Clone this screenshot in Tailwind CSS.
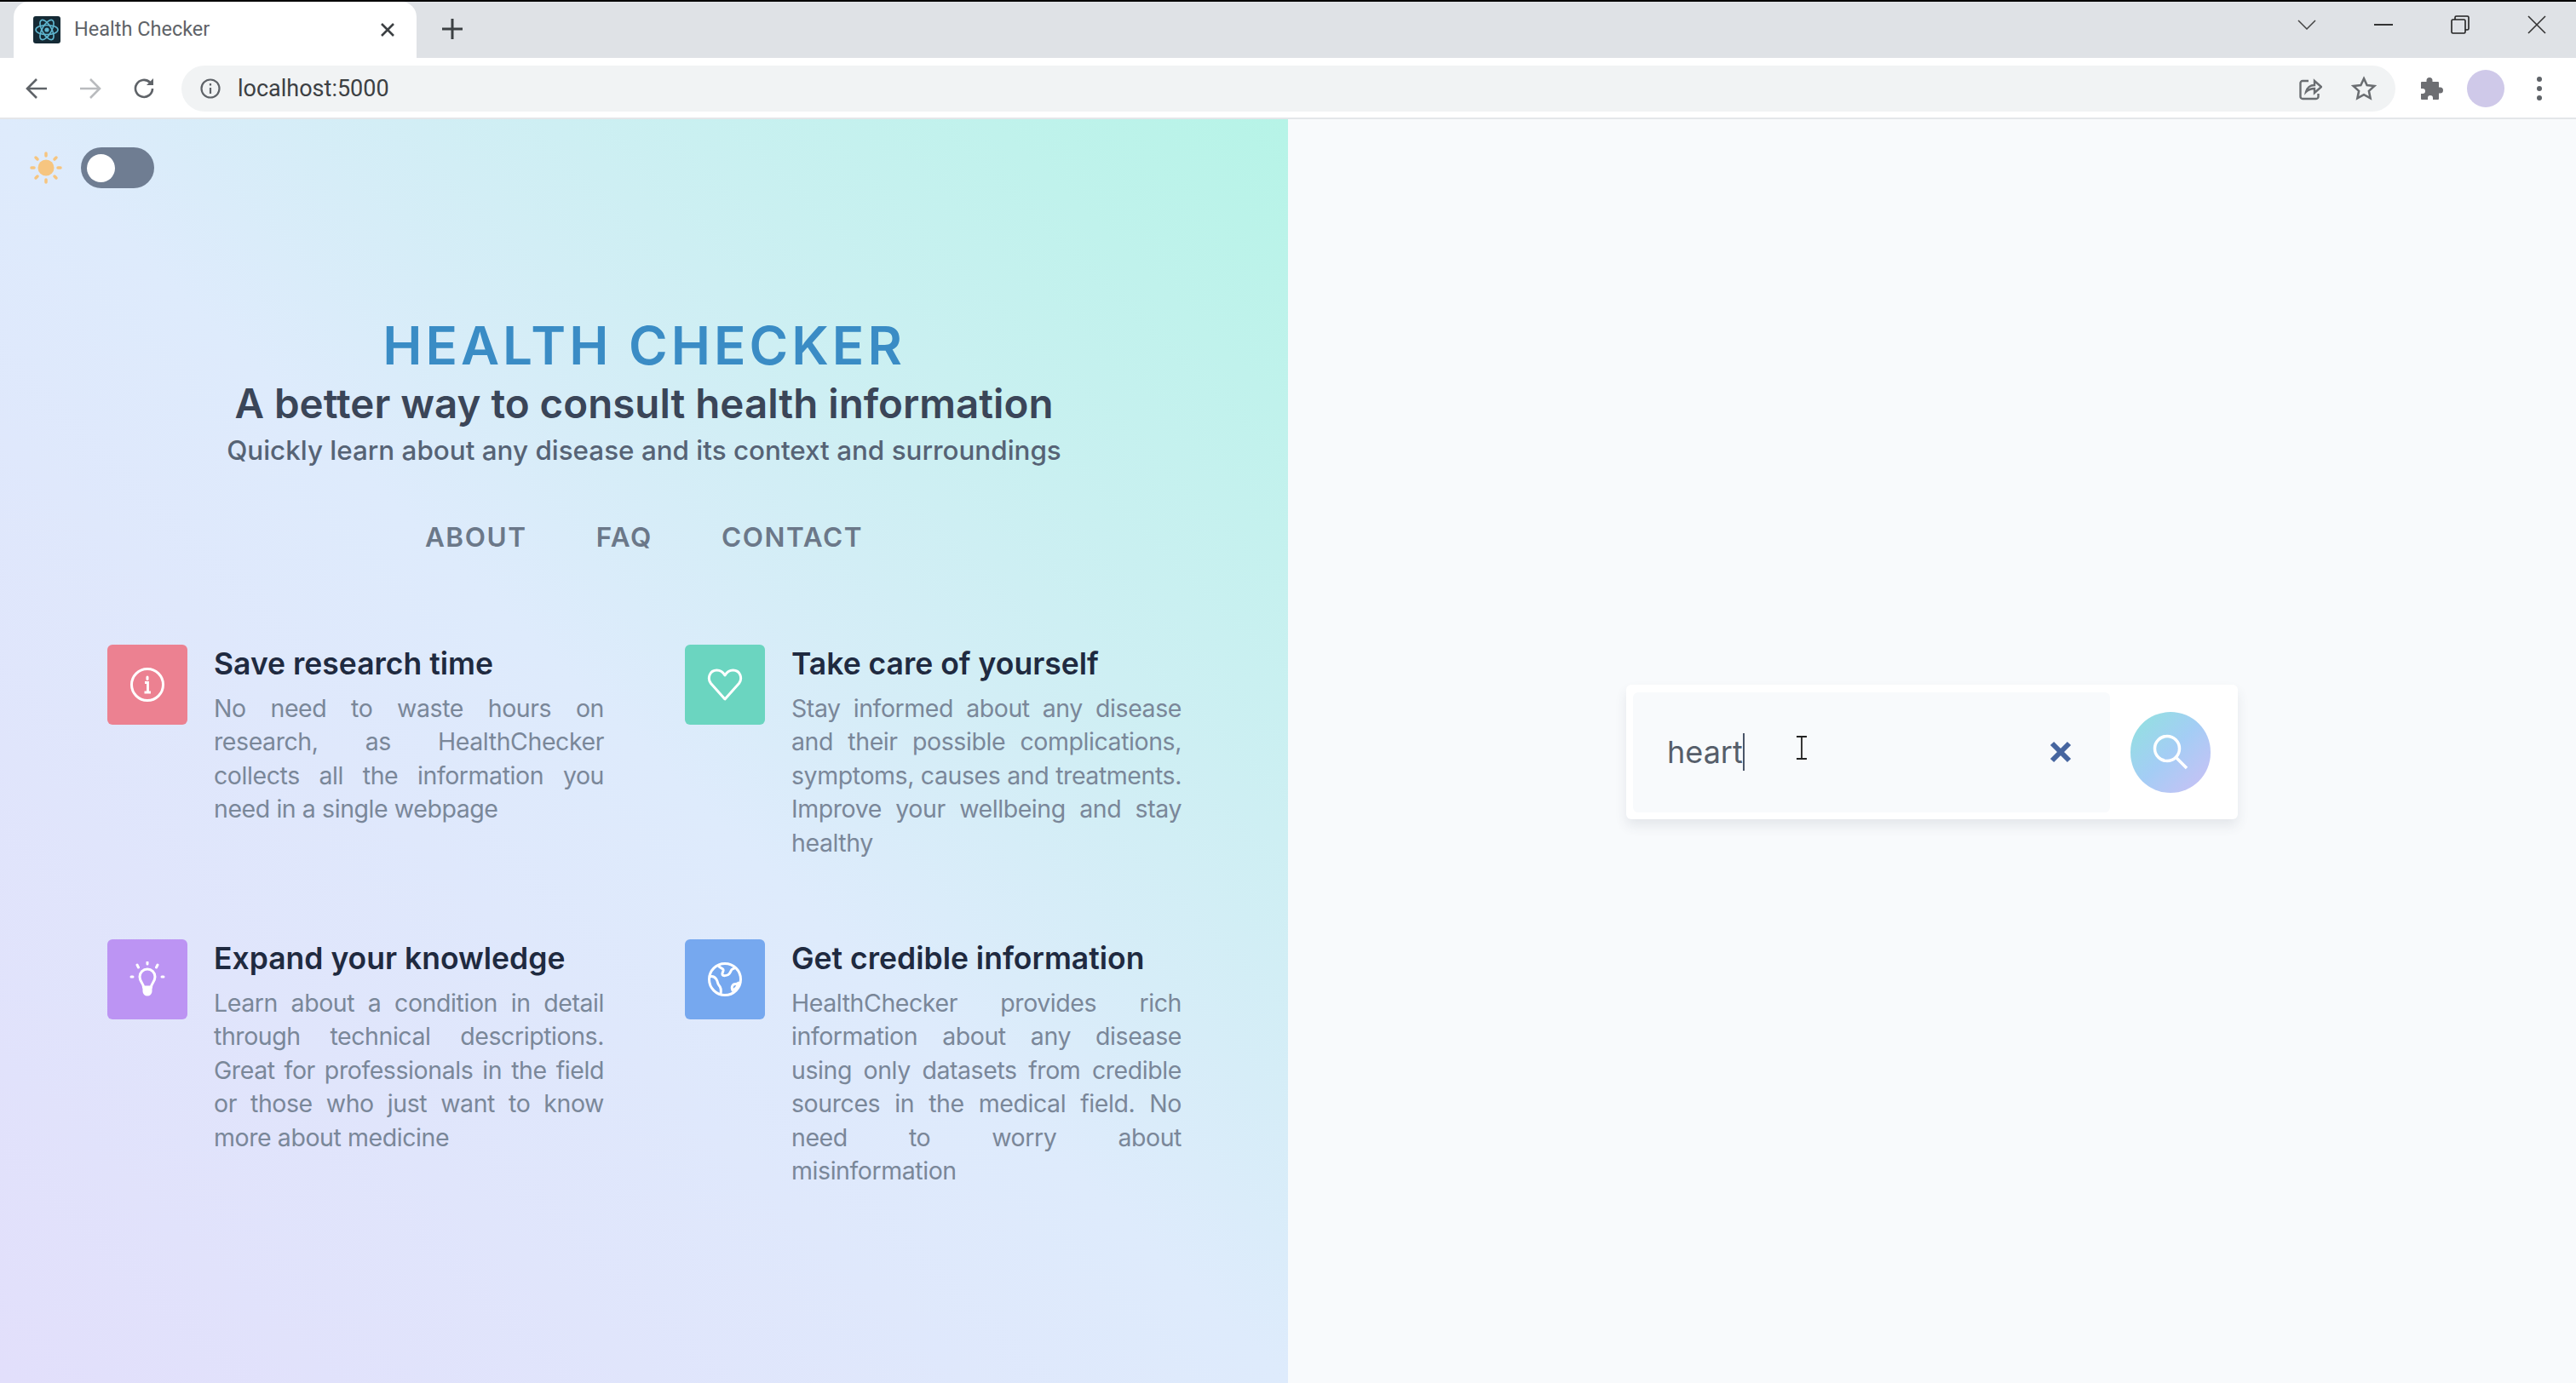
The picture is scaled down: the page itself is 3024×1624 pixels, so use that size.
<!DOCTYPE html>
<html lang="en">
<head>
<meta charset="utf-8">
<title>Health Checker</title>
<script src="https://cdn.jsdelivr.net/npm/@tailwindcss/browser@4"></script>
</head>
<body class="w-[3024px] h-[1624px] overflow-hidden bg-[#f8fafc] font-[Inter,sans-serif]">
<div class="h-[2px] bg-black"></div>
<!-- tab strip -->
<div class="h-[66px] bg-[#dfe2e6] flex items-end pl-[16px] font-[Roboto,sans-serif]">
  <div class="w-[473px] h-[66px] bg-white rounded-t-[18px] flex items-center pl-[23px] pr-[24px]">
    <svg class="w-[32px] h-[32px] shrink-0" viewBox="0 0 32 32"><rect width="32" height="32" rx="3" fill="#152a35"/><g fill="none" stroke="#5fb6cf" stroke-width="1.6"><ellipse cx="16" cy="16" rx="13" ry="5.5"/><ellipse cx="16" cy="16" rx="13" ry="5.5" transform="rotate(60 16 16)"/><ellipse cx="16" cy="16" rx="13" ry="5.5" transform="rotate(120 16 16)"/></g><circle cx="16" cy="16" r="2.6" fill="#5fb6cf"/></svg>
    <span class="ml-[16px] text-[23.5px] text-[#5f6368] leading-none">Health Checker</span>
    <svg class="ml-auto w-[20px] h-[20px]" viewBox="0 0 20 20" fill="none" stroke="#3c4043" stroke-width="2.6"><path d="M3 3l14 14M17 3L3 17"/></svg>
  </div>
  <svg class="ml-[30px] mb-[22px] w-[24px] h-[24px]" viewBox="0 0 24 24" fill="none" stroke="#3c4043" stroke-width="3"><path d="M12 0v24M0 12h24"/></svg>
  <div class="ml-auto flex items-center mb-[28px] pr-[35px]">
    <svg class="w-[22px] h-[12px]" viewBox="0 0 22 12" fill="none" stroke="#444" stroke-width="1.5"><path d="M1 1l10 10L21 1"/></svg>
    <svg class="ml-[68px] w-[22px] h-[4px]" viewBox="0 0 22 4"><rect y="1" width="22" height="2" fill="#333"/></svg>
    <svg class="ml-[68px] w-[22px] h-[22px]" viewBox="0 0 22 22" fill="none" stroke="#222" stroke-width="1.6"><rect x="1" y="5" width="16" height="16" rx="1.5"/><path d="M5 5V2.5C5 1.7 5.7 1 6.500 1H19.500C20.300 1 21 1.700 21 2.500V15.500C21 16.300 20.300 17 19.500 17H17"/></svg>
    <svg class="ml-[68px] w-[22px] h-[22px]" viewBox="0 0 22 22" fill="none" stroke="#333" stroke-width="1.6"><path d="M1 1l20 20M21 1L1 21"/></svg>
  </div>
</div>
<!-- toolbar -->
<div class="h-[72px] pt-[2px] bg-white border-b-[2px] border-[#e4e6e9] flex items-center font-[Roboto,sans-serif]">
  <svg class="ml-[30px] w-[26px] h-[26px]" viewBox="0 0 26 26" fill="none" stroke="#5f6368" stroke-width="2.6"><path d="M25 13H3M13 2L2 13l11 11"/></svg>
  <svg class="ml-[37px] w-[26px] h-[26px]" viewBox="0 0 26 26" fill="none" stroke="#b9bbbe" stroke-width="2.6"><path d="M1 13h22M13 2l11 11-11 11"/></svg>
  <svg class="ml-[36px] w-[28px] h-[28px]" viewBox="0 0 28 28" fill="none" stroke="#5f6368" stroke-width="2.6"><path d="M24 14a10 10 0 1 1-3-7.200"/><path d="M25 2v8h-8z" fill="#5f6368" stroke="none"/></svg>
  <div class="ml-[30px] w-[2599px] h-[54px] rounded-full bg-[#f1f3f4] flex items-center pl-[22px] pr-[22px]">
    <svg class="w-[24px] h-[24px]" viewBox="0 0 24 24" fill="none" stroke="#5f6368" stroke-width="2.200"><circle cx="12" cy="12" r="10.500"/><path d="M12 11v7M12 6v2.500"/></svg>
    <span class="ml-[20px] text-[27px] text-[#3c4043] leading-none">localhost:5000</span>
    <svg class="ml-auto w-[28px] h-[28px]" viewBox="0 0 28 28" fill="none" stroke="#6a6d71" stroke-width="2.400"><path d="M12 5H5a2.500 2.500 0 0 0-2.500 2.500v16A2.500 2.500 0 0 0 5 26h16a2.500 2.500 0 0 0 2.500-2.500V20"/><path d="M9 18c1-5 5-8 10-8V5l8 7-8 7v-5c-4 0-7 1-10 4z"/></svg>
    <svg class="ml-[34px] w-[30px] h-[30px]" viewBox="0 0 24 24" fill="none" stroke="#6a6d71" stroke-width="2"><path d="M12 2.500l2.900 6.300 6.900.8-5.100 4.700 1.400 6.800-6.100-3.400-6.100 3.400 1.400-6.800-5.100-4.700 6.900-.8z"/></svg>
  </div>
  <svg class="ml-[29px] w-[28px] h-[28px]" viewBox="0 0 28 28" fill="#6d6e72"><path d="M11 1a3.500 3.500 0 0 1 3.500 3.500V6H21a1 1 0 0 1 1 1v5.500h1.500a3.500 3.500 0 1 1 0 7H22V26a1 1 0 0 1-1 1h-6v-2a3 3 0 1 0-6 0v2H2a1 1 0 0 1-1-1v-6h2a3 3 0 1 0 0-6H1V7a1 1 0 0 1 1-1h5.500V4.500A3.500 3.500 0 0 1 11 1z"/></svg>
  <div class="ml-[27px] w-[44px] h-[44px] rounded-full bg-[#cfc9e9]"></div>
  <div class="ml-[38px] flex flex-col gap-[5px]"><i class="block w-[6px] h-[6px] rounded-full bg-[#5f6368]"></i><i class="block w-[6px] h-[6px] rounded-full bg-[#5f6368]"></i><i class="block w-[6px] h-[6px] rounded-full bg-[#5f6368]"></i></div>
</div>
<!-- page -->
<div class="flex h-[1484px]">
  <div class="w-[1512px] shrink-0 bg-linear-to-tr from-[#e2dffb] via-[#deebfc] to-[#b6f4e7]">
    <div class="flex items-center pl-[35px] pt-[33px] gap-[22px]">
      <svg class="w-[38px] h-[38px]" viewBox="0 0 38 38" fill="#f6c580"><circle cx="19" cy="19" r="9.500"/><g stroke="#f6c580" stroke-width="3.500" stroke-linecap="round"><path d="M19 2v3M19 33v3M2 19h3M33 19h3M7 7l2 2M29 29l2 2M31 7l-2 2M9 29l-2 2"/></g></svg>
      <div class="w-[86px] h-[48px] rounded-full bg-[#6f7d92] flex items-center pl-[7px]"><div class="w-[33px] h-[33px] rounded-full bg-white"></div></div>
    </div>
    <div class="mt-[148px] text-center">
      <h1 class="text-[62px] leading-[74px] font-semibold tracking-[4px] text-[#3a8cc5]">HEALTH CHECKER</h1>
      <h2 class="mt-[2px] text-[47.5px] leading-[58px] font-semibold text-[#3a4558]">A better way to consult health information</h2>
      <p class="mt-[6px] text-[31.4px] leading-[40px] font-medium text-[#566375]">Quickly learn about any disease and its context and surroundings</p>
      <nav class="mt-[62px] flex justify-center gap-[81px] text-[31.5px] leading-[40px] font-semibold tracking-[0.05em] text-[#6b7889]">
        <a>ABOUT</a><a>FAQ</a><a>CONTACT</a>
      </nav>
    </div>
    <div class="mt-[106px] ml-[126px] grid grid-cols-[583px_583px] gap-x-[95px] gap-y-[94px]">
      <div class="flex gap-[31px]">
        <div class="w-[94px] h-[94px] shrink-0 rounded-[6px] bg-[#ec8191] flex items-center justify-center">
          <svg class="w-[42px] h-[42px]" viewBox="0 0 42 42" fill="none" stroke="#fff" stroke-width="3"><circle cx="21" cy="21" r="18.500"/><path d="M18 18.500h3.500V30M17.500 30h7.500" stroke-width="2.800"/><path d="M21 12v2.500" stroke-linecap="round"/></svg>
        </div>
        <div class="w-[458px]">
          <h3 class="text-[35.500px] leading-[46px] font-semibold text-[#1f2a40]">Save research time</h3>
          <p class="mt-[9px] text-[28.500px] tracking-[-0.015em] leading-[39.400px] text-[#7a8799] text-justify">No need to waste hours on research, as HealthChecker collects all the information you need in a single webpage</p>
        </div>
      </div>
      <div class="flex gap-[31px]">
        <div class="w-[94px] h-[94px] shrink-0 rounded-[6px] bg-[#6bd5c0] flex items-center justify-center">
          <svg class="w-[42px] h-[42px]" viewBox="0 0 42 42" fill="none" stroke="#fff" stroke-width="3"><path d="M21 38L4.500 19.500C0 13.500 3 4 11.500 4 16 4 19 6.500 21 10c2-3.500 5-6 9.500-6C39 4 42 13.500 37.500 19.500z" stroke-linejoin="round"/></svg>
        </div>
        <div class="w-[458px]">
          <h3 class="text-[35.500px] leading-[46px] font-semibold text-[#1f2a40]">Take care of yourself</h3>
          <p class="mt-[9px] text-[28.500px] tracking-[-0.015em] leading-[39.400px] text-[#7a8799] text-justify">Stay informed about any disease and their possible complications, symptoms, causes and treatments. Improve your wellbeing and stay healthy</p>
        </div>
      </div>
      <div class="flex gap-[31px]">
        <div class="w-[94px] h-[94px] shrink-0 rounded-[6px] bg-[#bc94f3] flex items-center justify-center">
          <svg class="w-[42px] h-[42px]" viewBox="0 0 42 42" fill="none" stroke="#fff" stroke-width="3" stroke-linecap="round"><path d="M16.500 30c0-4-4.500-6-4.500-12a9 9 0 0 1 18 0c0 6-4.500 8-4.500 12z"/><path d="M17 31v4a4 4 0 0 0 8 0v-4" fill="#fff"/><path d="M21 1v2M9 4l1.500 3M33 4l-1.500 3M2 18h2M38 18h2"/></svg>
        </div>
        <div class="w-[458px]">
          <h3 class="text-[35.500px] leading-[46px] font-semibold text-[#1f2a40]">Expand your knowledge</h3>
          <p class="mt-[9px] text-[28.500px] tracking-[-0.015em] leading-[39.400px] text-[#7a8799] text-justify">Learn about a condition in detail through technical descriptions. Great for professionals in the field or those who just want to know more about medicine</p>
        </div>
      </div>
      <div class="flex gap-[31px]">
        <div class="w-[94px] h-[94px] shrink-0 rounded-[6px] bg-[#76a8ef] flex items-center justify-center">
          <svg class="w-[42px] h-[42px]" viewBox="0 0 42 42" fill="none" stroke="#fff" stroke-width="3" stroke-linejoin="round"><circle cx="21" cy="21" r="18.500"/><path d="M13 4.500c1 3 5 3 6 5s-2 4-1 6 5 1 7 0 3-5 4-6 4-2 5-2.500"/><path d="M3 18c3-1 6 0 8 3s1 5 3 7 3 4 2 10"/><path d="M31 27c2-1 4 0 6-2-1 4-3 7-7 9-1-2-1-5 1-7z"/></svg>
        </div>
        <div class="w-[458px]">
          <h3 class="text-[35.500px] leading-[46px] font-semibold text-[#1f2a40]">Get credible information</h3>
          <p class="mt-[9px] text-[28.500px] tracking-[-0.015em] leading-[39.400px] text-[#7a8799] text-justify">HealthChecker provides rich information about any disease using only datasets from credible sources in the medical field. No need to worry about misinformation</p>
        </div>
      </div>
    </div>
  </div>
  <div class="flex-1 flex items-center justify-center">
    <div class="relative mt-[2px] w-[718px] h-[158px] bg-white rounded-[6px] shadow-[0_8px_14px_rgba(60,70,90,0.10)] flex items-center pl-[8px]">
      <div class="w-[560px] h-[141px] rounded-[6px] bg-[#f8fafc] flex items-center pl-[40px]">
        <span class="text-[36px] leading-[44px] text-[#565e6a] border-r-[2px] border-[#4a5568]">heart</span>
        <svg class="ml-auto mr-[45px] w-[26px] h-[26px]" viewBox="0 0 26 26" fill="none" stroke="#46659f" stroke-width="6"><path d="M3 3l20 20M23 3L3 23"/></svg>
      </div>
      <div class="ml-[24px] w-[94px] h-[95px] rounded-full bg-linear-to-br from-[#8fe3dd] via-[#a4cdf5] to-[#cbbff5] flex items-center justify-center">
        <svg class="w-[42px] h-[42px]" viewBox="0 0 42 42" fill="none" stroke="#fff" stroke-width="3.500"><circle cx="17" cy="17" r="14.500"/><path d="M27.500 27.500L40 40"/></svg>
      </div>
      <svg class="absolute left-[199px] top-[60px] w-[14px] h-[28px]" viewBox="0 0 14 28" fill="none" stroke="#222" stroke-width="1.800"><path d="M1 1h12M1 27h12M7 1v26"/></svg>
    </div>
  </div>
</div>
</body>
</html>
